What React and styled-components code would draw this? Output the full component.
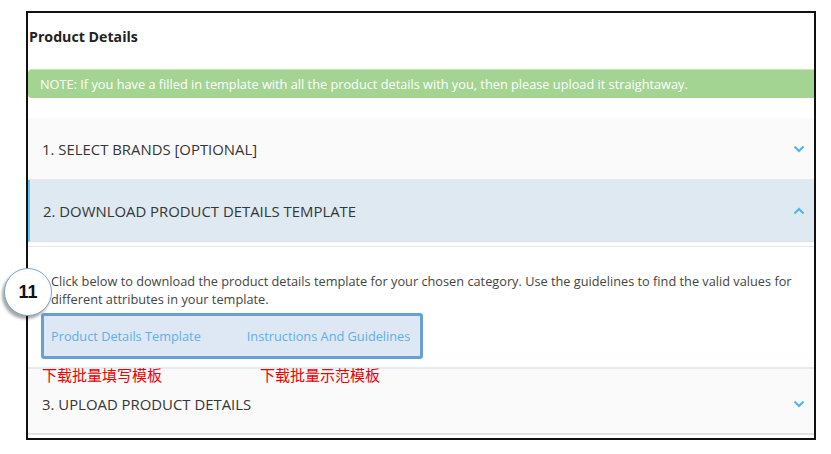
import React from "react";
import styled, { createGlobalStyle } from "styled-components";

const Global = createGlobalStyle`
  html, body { margin: 0; padding: 0; background: #fff; }
  body { font-family: "Open Sans", "Noto Sans", sans-serif; }
  * { box-sizing: border-box; }
`;

const Page = styled.div`
  position: relative;
  width: 831px;
  height: 454px;
  padding: 11px 0 0 26px;
`;

const Frame = styled.div`
  width: 790px;
  height: 429px;
  border: 2px solid #111;
  overflow: hidden;
  display: flex;
  flex-direction: column;
`;

const Title = styled.h2`
  margin: 14px 0 0 1px;
  font-size: 14.2px;
  line-height: 20px;
  font-weight: 700;
  color: #222;
`;

const Note = styled.div`
  margin-top: 22px;
  height: 29px;
  line-height: 29px;
  padding-left: 12px;
  background: #a3d492;
  border-top: 1px solid #c6e5ba;
  border-radius: 4px 0 0 4px;
  color: #fff;
  font-size: 12.75px;
  white-space: nowrap;
`;

const Accordion = styled.div`
  margin-top: 20px;
  display: flex;
  flex-direction: column;
`;

const Header = styled.div`
  height: ${(p) => p.$h || 62}px;
  display: flex;
  align-items: center;
  justify-content: space-between;
  padding: ${(p) => p.$pt || 0}px 8px 0 ${(p) => (p.$active ? "13px" : "14px")};
  background: ${(p) => (p.$active ? "#dfe9f1" : "#fafafa")};
  border-left: ${(p) => (p.$active ? "2px solid #62c3ee" : "none")};
  border-bottom: ${(p) => (p.$last ? "2px solid #e2e2e2" : p.$active ? "1px solid #d6e2ea" : "1px solid #e9e9e9")};
  font-size: 14.9px;
  color: #363636;
  white-space: nowrap;
`;

const Body = styled.div`
  margin-top: 4px;
  border-top: 1px solid #e1e9ef;
  border-bottom: 2px solid #e3ebf1;
  padding: 25px 0 8px 13px;
  background: #fff;
`;

const Text = styled.p`
  margin: 0 0 5px 10px;
  font-size: 12.75px;
  line-height: 18px;
  color: #444;
`;

const LinkBox = styled.div`
  width: 382px;
  height: 46px;
  display: flex;
  align-items: center;
  gap: 46px;
  padding: 0 10px 0 7px;
  background: #dde8f4;
  border: 3px solid #6a9fd4;
  border-radius: 3px;
`;

const LinkText = styled.a`
  font-size: 12.75px;
  color: #5cb0e6;
  text-decoration: none;
  white-space: nowrap;
`;

const Badge = styled.div`
  position: absolute;
  left: 4px;
  top: 268px;
  width: 48px;
  height: 48px;
  border-radius: 50%;
  background: #fff;
  border: 1px solid #7fa6cc;
  box-shadow: -2px 3px 3px rgba(0, 0, 0, 0.35);
  display: flex;
  align-items: center;
  justify-content: center;
  font-family: "Liberation Sans", Arial, sans-serif;
  font-weight: 700;
  font-size: 18px;
  color: #111;
`;

const Annotation = styled.div`
  position: absolute;
  left: ${(p) => p.$x}px;
  top: 365px;
  font-family: "Noto Sans CJK SC", sans-serif;
  font-size: 15px;
  line-height: 20px;
  color: #f00000;
  white-space: nowrap;
`;

const Chevron = ({ up }) => (
  <svg width="12" height="8" viewBox="0 0 12 8" style={{ marginRight: 1 }}>
    <path
      d={up ? "M1.5 6.5 L6 2 L10.5 6.5" : "M1.5 1.5 L6 6 L10.5 1.5"}
      fill="none"
      stroke="#4cb4ea"
      strokeWidth="2"
    />
  </svg>
);

export default function App() {
  return (
    <>
      <Global />
      <Page>
        <Frame>
          <Title>Product Details</Title>
          <Note>
            NOTE: If you have a filled in template with all the product details with you, then please upload it straightaway.
          </Note>
          <Accordion>
            <Header>
              <span>1. SELECT BRANDS [OPTIONAL]</span>
              <Chevron />
            </Header>
            <Header $active>
              <span>2. DOWNLOAD PRODUCT DETAILS TEMPLATE</span>
              <Chevron up />
            </Header>
            <Body>
              <Text>
                Click below to download the product details template for your chosen category. Use the guidelines to find the valid values for different attributes in your template.
              </Text>
              <LinkBox>
                <LinkText>Product Details Template</LinkText>
                <LinkText>Instructions And Guidelines</LinkText>
              </LinkBox>
            </Body>
            <Header $last $h={66} $pt={6}>
              <span>3. UPLOAD PRODUCT DETAILS</span>
              <Chevron />
            </Header>
          </Accordion>
        </Frame>
        <Badge>11</Badge>
        <Annotation $x={42}>下载批量填写模板</Annotation>
        <Annotation $x={260}>下载批量示范模板</Annotation>
      </Page>
    </>
  );
}
